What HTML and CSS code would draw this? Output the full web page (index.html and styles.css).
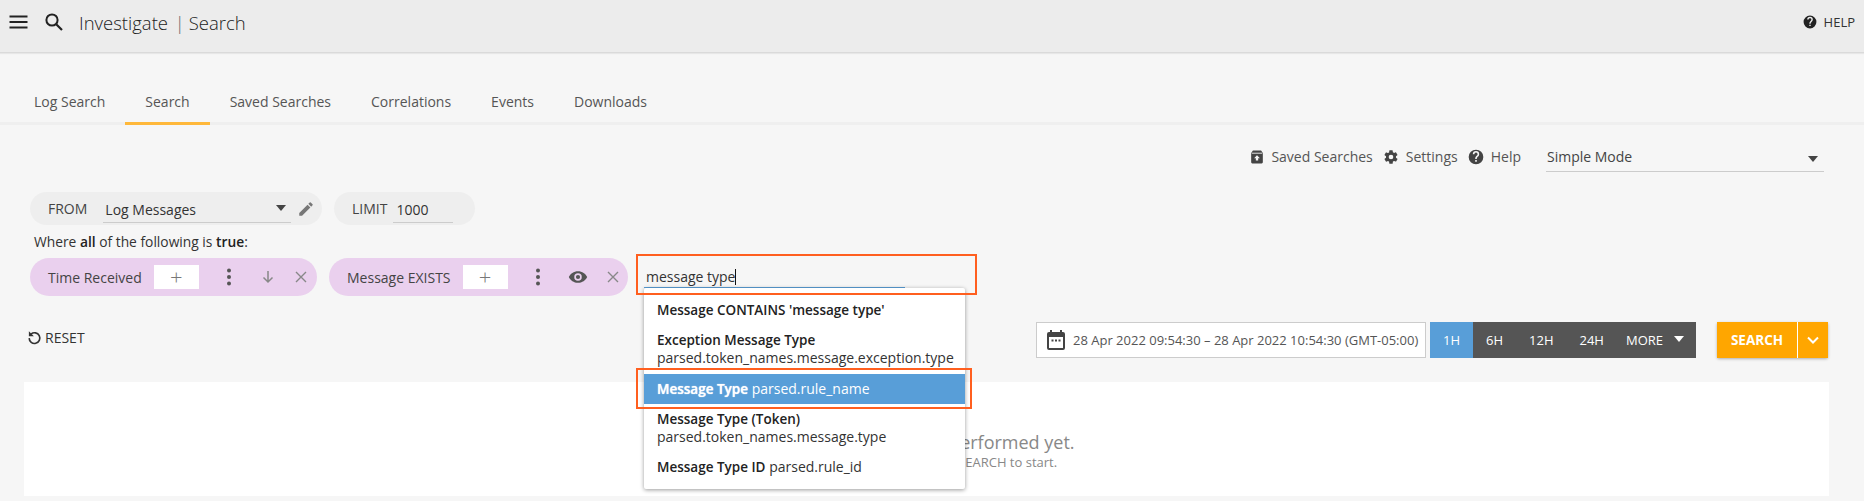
FILE: index.html
```html
<!DOCTYPE html>
<html lang="en">
<head>
<meta charset="utf-8">
<title>Investigate | Search</title>
<link rel="stylesheet" href="styles.css">
</head>
<body>
<header class="topbar">
  <svg class="ic-menu" viewBox="0 0 18 14" width="19" height="14"><path d="M0 1.500h18M0 7h18M0 12.500h18" stroke="#222" stroke-width="2" fill="none"/></svg>
  <svg class="ic-search" viewBox="0 0 20 20" width="20" height="20"><circle cx="8" cy="8" r="5.600" fill="none" stroke="#222" stroke-width="2"/><path d="M12.200 12.200L18 18" stroke="#222" stroke-width="2.200" fill="none"/></svg>
  <h1 class="title">Investigate <span class="pipe">|</span> Search</h1>
  <div class="top-help">
    <svg viewBox="0 0 24 24" width="14" height="14"><path fill="#222" d="M12 1a11 11 0 1 0 0 22 11 11 0 0 0 0-22zm1.200 18h-2.400v-2.400h2.400V19zm2.500-8.300l-1.100 1.100c-.9.900-1.400 1.600-1.400 3.200h-2.400v-.6c0-1.300.5-2.500 1.400-3.400l1.500-1.500c.4-.4.700-1 .7-1.700a2.400 2.400 0 0 0-4.800 0H7.200a4.800 4.800 0 0 1 9.600 0c0 1.100-.4 2-1.100 2.900z"/></svg>
    <span>HELP</span>
  </div>
</header>

<main class="page">
  <nav class="tabs">
    <a class="tab">Log Search</a>
    <a class="tab active">Search</a>
    <a class="tab">Saved Searches</a>
    <a class="tab">Correlations</a>
    <a class="tab">Events</a>
    <a class="tab">Downloads</a>
  </nav>

  <div class="toolbar">
    <span class="tool">
      <svg viewBox="0 0 24 24" width="14" height="16"><path fill="#444" d="M5 1h14l3 4v16a2 2 0 0 1-2 2H4a2 2 0 0 1-2-2V5z"/><path fill="#f6f6f6" d="M12 9l5 5h-3v4h-4v-4H7z"/><path stroke="#f6f6f6" stroke-width="1.500" d="M3 5.500h18"/></svg>
      Saved Searches
    </span>
    <span class="tool">
      <svg viewBox="0 0 24 24" width="16" height="16"><path fill="#444" fill-rule="evenodd" d="M19.400 13c.05-.3.100-.65.100-1s-.05-.7-.1-1l2.100-1.650a.5.500 0 0 0 .12-.64l-2-3.460a.5.500 0 0 0-.6-.22l-2.500 1a7.300 7.300 0 0 0-1.700-1l-.37-2.650A.5.500 0 0 0 14 2h-4a.5.500 0 0 0-.5.42L9.130 5.070c-.6.250-1.170.6-1.700 1l-2.490-1a.5.500 0 0 0-.6.220l-2 3.460a.5.500 0 0 0 .12.640L4.570 11c-.04.330-.07.670-.07 1s.03.670.07 1l-2.110 1.650a.5.500 0 0 0-.12.640l2 3.460c.12.220.38.300.6.220l2.490-1c.53.400 1.100.750 1.700 1l.37 2.650A.5.500 0 0 0 10 22h4a.5.500 0 0 0 .5-.42l.37-2.650c.6-.25 1.170-.6 1.700-1l2.490 1c.23.080.48 0 .6-.22l2-3.460a.5.500 0 0 0-.12-.64zM12 15.500a3.500 3.500 0 1 1 0-7 3.500 3.500 0 0 1 0 7z"/></svg>
      Settings
    </span>
    <span class="tool">
      <svg viewBox="0 0 24 24" width="16" height="16"><path fill="#444" d="M12 1a11 11 0 1 0 0 22 11 11 0 0 0 0-22zm1.200 18h-2.400v-2.400h2.400V19zm2.500-8.300l-1.100 1.100c-.9.900-1.400 1.600-1.400 3.200h-2.400v-.6c0-1.300.5-2.500 1.400-3.400l1.500-1.500c.4-.4.700-1 .7-1.700a2.400 2.400 0 0 0-4.800 0H7.200a4.800 4.800 0 0 1 9.600 0c0 1.100-.4 2-1.100 2.900z"/></svg>
      Help
    </span>
    <div class="mode"><span>Simple Mode</span><i class="caret"></i></div>
  </div>

  <div class="source-row">
    <div class="pill grey from">
      <span class="pill-label">FROM</span>
      <div class="field source"><span>Log Messages</span><i class="caret"></i></div>
      <svg viewBox="0 0 24 24" width="18" height="18"><path fill="#777" d="M3 17.250V21h3.750L17.810 9.940l-3.750-3.750zM20.710 7.040a1 1 0 0 0 0-1.410l-2.340-2.340a1 1 0 0 0-1.410 0l-1.830 1.830 3.750 3.750z"/></svg>
    </div>
    <div class="pill grey limit">
      <span class="pill-label">LIMIT</span>
      <div class="field limit-field">1000</div>
    </div>
  </div>

  <p class="where">Where <b>all</b> of the following is <b>true</b>:</p>

  <div class="filter-row">
    <div class="pill purple f1">
      <span class="pill-label">Time Received</span>
      <span class="plus">+</span>
      <svg class="dots" viewBox="0 0 4 18" width="4" height="18"><circle cx="2" cy="2.500" r="2" fill="#555"/><circle cx="2" cy="9" r="2" fill="#555"/><circle cx="2" cy="15.500" r="2" fill="#555"/></svg>
      <svg class="arrow" viewBox="0 0 14 14" width="14" height="14"><path d="M7 1v11M2.500 7.500L7 12l4.500-4.500" fill="none" stroke="#888" stroke-width="1.500"/></svg>
      <svg class="close" viewBox="0 0 12 12" width="12" height="12"><path d="M1 1l10 10M11 1L1 11" stroke="#888" stroke-width="1.400"/></svg>
    </div>
    <div class="pill purple f2">
      <span class="pill-label">Message EXISTS</span>
      <span class="plus">+</span>
      <svg class="dots" viewBox="0 0 4 18" width="4" height="18"><circle cx="2" cy="2.500" r="2" fill="#555"/><circle cx="2" cy="9" r="2" fill="#555"/><circle cx="2" cy="15.500" r="2" fill="#555"/></svg>
      <svg class="eye" viewBox="0 0 24 16" width="20" height="14"><path fill="#555" fill-rule="evenodd" d="M12 1C7 1 2.700 4.100 1 8c1.700 3.900 6 7 11 7s9.300-3.100 11-7c-1.700-3.900-6-7-11-7zm0 11.500a4.500 4.500 0 1 1 0-9 4.500 4.500 0 0 1 0 9zm0-7a2.500 2.500 0 1 0 0 5 2.500 2.500 0 0 0 0-5z"/></svg>
      <svg class="close" viewBox="0 0 12 12" width="12" height="12"><path d="M1 1l10 10M11 1L1 11" stroke="#888" stroke-width="1.400"/></svg>
    </div>
    <div class="typeahead">
      <div class="type-input">message type<i class="cursor"></i></div>
      <ul class="menu">
        <li class="item one"><b>Message CONTAINS 'message type'</b></li>
        <li class="item two"><b>Exception Message Type</b><br>parsed.token_names.message.exception.type</li>
        <li class="item sel"><b>Message Type</b> parsed.rule_name</li>
        <li class="item two tail"><b>Message Type (Token)</b><br>parsed.token_names.message.type</li>
        <li class="item one"><b>Message Type ID</b> parsed.rule_id</li>
      </ul>
      <div class="mark mark-input"></div>
      <div class="mark mark-sel"></div>
    </div>
  </div>

  <div class="action-row">
    <div class="reset">
      <svg viewBox="0 0 24 24" width="15" height="15"><path d="M6.500 6.500A8.500 8.500 0 1 1 3.500 13" fill="none" stroke="#333" stroke-width="2.600"/><path fill="#333" d="M3 2v8h8z"/></svg>
      RESET
    </div>
    <div class="range">
      <div class="date">
        <svg viewBox="0 0 18 20" width="18" height="20"><path fill="#444" d="M3 0h2v2h8V0h2v2h1a2 2 0 0 1 2 2v14a2 2 0 0 1-2 2H2a2 2 0 0 1-2-2V4a2 2 0 0 1 2-2h1z"/><rect x="2" y="7" width="14" height="11" fill="#fff"/><path d="M4.500 10.500h2M8 10.500h2M11.500 10.500h2" stroke="#444" stroke-width="2"/></svg>
        <span>28 Apr 2022 09:54:30 – 28 Apr 2022 10:54:30 (GMT-05:00)</span>
      </div>
      <div class="quick">
        <span class="q on">1H</span><span class="q">6H</span><span class="q">12H</span><span class="q">24H</span><span class="q more">MORE <i class="caret white"></i></span>
      </div>
    </div>
    <div class="search-btn">
      <span class="go">SEARCH</span>
      <span class="chev"><svg viewBox="0 0 12 8" width="12" height="8"><path d="M1 1.500l5 5 5-5" fill="none" stroke="#fff" stroke-width="2"/></svg></span>
    </div>
  </div>

  <section class="results">
    <p class="big">No search has been performed yet.</p>
    <p class="small">Set your criteria and press SEARCH to start.</p>
  </section>
</main>
</body>
</html>
```
FILE: styles.css
```css
* { box-sizing: border-box; }
html, body { margin: 0; height: 501px; overflow: hidden; }
body { background: #f6f6f6; font-family: "Open Sans", sans-serif; font-size: 14px; color: #444; }

.topbar { height: 53px; background: #ececec; border-bottom: 1px solid #dadada; display: flex; align-items: center; padding: 0 9px 8px 9px; box-shadow: 0 1px 1px rgba(0,0,0,.06); }
.ic-search { margin-left: 16px; margin-top: -1px; }
.title { margin: 0 0 0 15px; font-size: 18.500px; font-weight: 300; color: #222; }
.pipe { color: #666; margin: 0 -1px 0 2px; }
.top-help { margin-left: auto; display: flex; align-items: center; gap: 7px; font-size: 13px; color: #333; margin-top: -1px; }

.tabs { height: 72px; display: flex; align-items: flex-end; padding-left: 14px; border-bottom: 3px solid #efefef; }
.tab { padding: 0 20px; height: 42px; line-height: 37px; margin-bottom: -3px; border-bottom: 3px solid transparent; color: #555; font-size: 14px; }
.tab.active { border-bottom-color: #ffb83a; }

.toolbar { display: flex; justify-content: flex-end; align-items: center; padding: 15px 40px 0 0; height: 47px; }
.tool { display: inline-flex; align-items: center; gap: 7px; margin-right: 11px; white-space: nowrap; font-size: 14px; color: #555; margin-top: 1px; }
.tool:nth-child(2) { margin-right: 10px; }
.tool:first-child { margin-right: 10px; }
.tool svg { flex: none; }
.mode { width: 278px; margin-left: 14px; height: 32px; display: flex; align-items: center; justify-content: space-between; padding: 2px 6px 0 1px; border-bottom: 1px solid #ccc; }
.mode .caret { margin-top: 4px; }
.caret { display: inline-block; width: 0; height: 0; border-left: 5px solid transparent; border-right: 5px solid transparent; border-top: 6px solid #444; }
.caret.white { border-top-color: #fff; margin-left: 8px; vertical-align: 3px; }

.source-row { display: flex; gap: 12px; padding: 20px 0 0 30px; }
.pill { display: flex; align-items: center; border-radius: 20px; }
.grey { background: #eee; height: 33px; }
.from { width: 292px; padding-left: 18px; }
.limit { width: 141px; padding-left: 18px; }
.field { border-bottom: 1px solid #ccc; height: 24px; margin-top: 4px; color: #333; }
.pill-label { white-space: nowrap; color: #444; }
.source { width: 188px; margin-left: 16px; margin-right: 6px; padding: 0 2px; display: flex; justify-content: space-between; align-items: center; }
.source .caret { margin-right: 3px; margin-top: -4px; }
.limit-field { width: 60px; margin-left: 6px; padding-left: 3px; line-height: 21px; }
.source span { line-height: 21px; padding-bottom: 2px; }

.where { margin: 7px 0 0 34px; height: 19px; line-height: 19px; color: #333; font-size: 13.800px; }
.where b { font-weight: 600; color: #222; }

.filter-row { display: flex; gap: 12px; padding: 7px 0 0 30px; position: relative; align-items: flex-start; }
.purple { background: #ead0ee; height: 38px; padding-left: 18px; }
.f1 { width: 287px; }
.f2 { width: 299px; }
.plus { width: 45px; height: 24px; background: #fff; margin-left: 12px; text-align: center; line-height: 23px; font-size: 22px; font-weight: 300; color: #777; flex: none; }
.dots { margin-left: 28px; }
.arrow { margin-left: 30px; }
.f1 .close { margin-left: 20px; }
.eye { margin-left: 28px; }
.f2 .close { margin-left: 19px; }

.typeahead { width: 321px; margin-left: 4px; position: relative; height: 38px; }
.type-input { height: 30px; line-height: 37px; width: 261px; border-bottom: 1px solid #5a9fd8; padding-left: 2px; color: #333; font-size: 14px; white-space: nowrap; }
.cursor { display: inline-block; width: 1px; height: 16px; background: #111; vertical-align: -3px; }
.menu { position: absolute; z-index: 5; left: 0; top: 30px; width: 321px; height: 201px; margin: 0; padding: 7px 0 0; list-style: none; background: #fff; border-radius: 2px; box-shadow: 0 1px 4px rgba(0,0,0,.4); color: #333; font-size: 14px; line-height: 18px; }
.item { padding: 0 13px; white-space: nowrap; }
.item b { font-weight: 600; color: #222; font-size: 13.500px; }
.item.one { height: 30px; padding-top: 6px; }
.item.two { height: 49px; padding-top: 6px; }
.item.two.tail { height: 48px; }
.item.sel { height: 30px; padding-top: 6px; background: #589ed8; color: #fff; }
.item.sel b { color: #fff; text-shadow: 0 0 1px #fff; }
.mark { position: absolute; z-index: 6; border: 2px solid #ff5f1f; pointer-events: none; }
.mark-input { left: -8px; top: -4px; width: 341px; height: 41px; }
.mark-sel { left: -8px; top: 110px; width: 336px; height: 41px; }

.action-row { display: flex; align-items: flex-start; padding: 26px 36px 0 27px; height: 86px; }
.reset { display: flex; align-items: center; gap: 3px; font-size: 14px; color: #333; margin-top: 6px; }
.range { display: flex; margin-left: auto; gap: 4px; }
.date { width: 390px; height: 36px; background: #fff; border: 1px solid #ccc; display: flex; align-items: center; gap: 8px; padding-left: 10px; font-size: 13px; color: #555; white-space: nowrap; }
.quick { display: flex; background: #555; height: 36px; width: 266px; color: #fff; font-size: 13px; }
.q { flex: none; line-height: 36px; padding: 0 13px; white-space: nowrap; }
.q.on { background: #589ed8; width: 43px; text-align: center; padding: 0; }
.q.more { padding: 0 0 0 9px; }
.search-btn { display: flex; margin-left: 21px; height: 36px; box-shadow: 0 1px 3px rgba(0,0,0,.3); border-radius: 2px; }
.go { width: 81px; background: #ffa600; color: #fff; font-weight: 700; font-size: 13.500px; line-height: 36px; text-align: center; border-right: 1px solid #fff; }
.chev { width: 30px; background: #ffa600; display: flex; align-items: center; justify-content: center; }

.results { margin: 0 35px 0 24px; height: 114px; background: #fff; text-align: center; padding-top: 48px; }
.big { margin: 0; font-size: 18px; line-height: 24px; color: #888; }
.small { margin: 0; font-size: 13px; line-height: 16px; color: #888; }
```
